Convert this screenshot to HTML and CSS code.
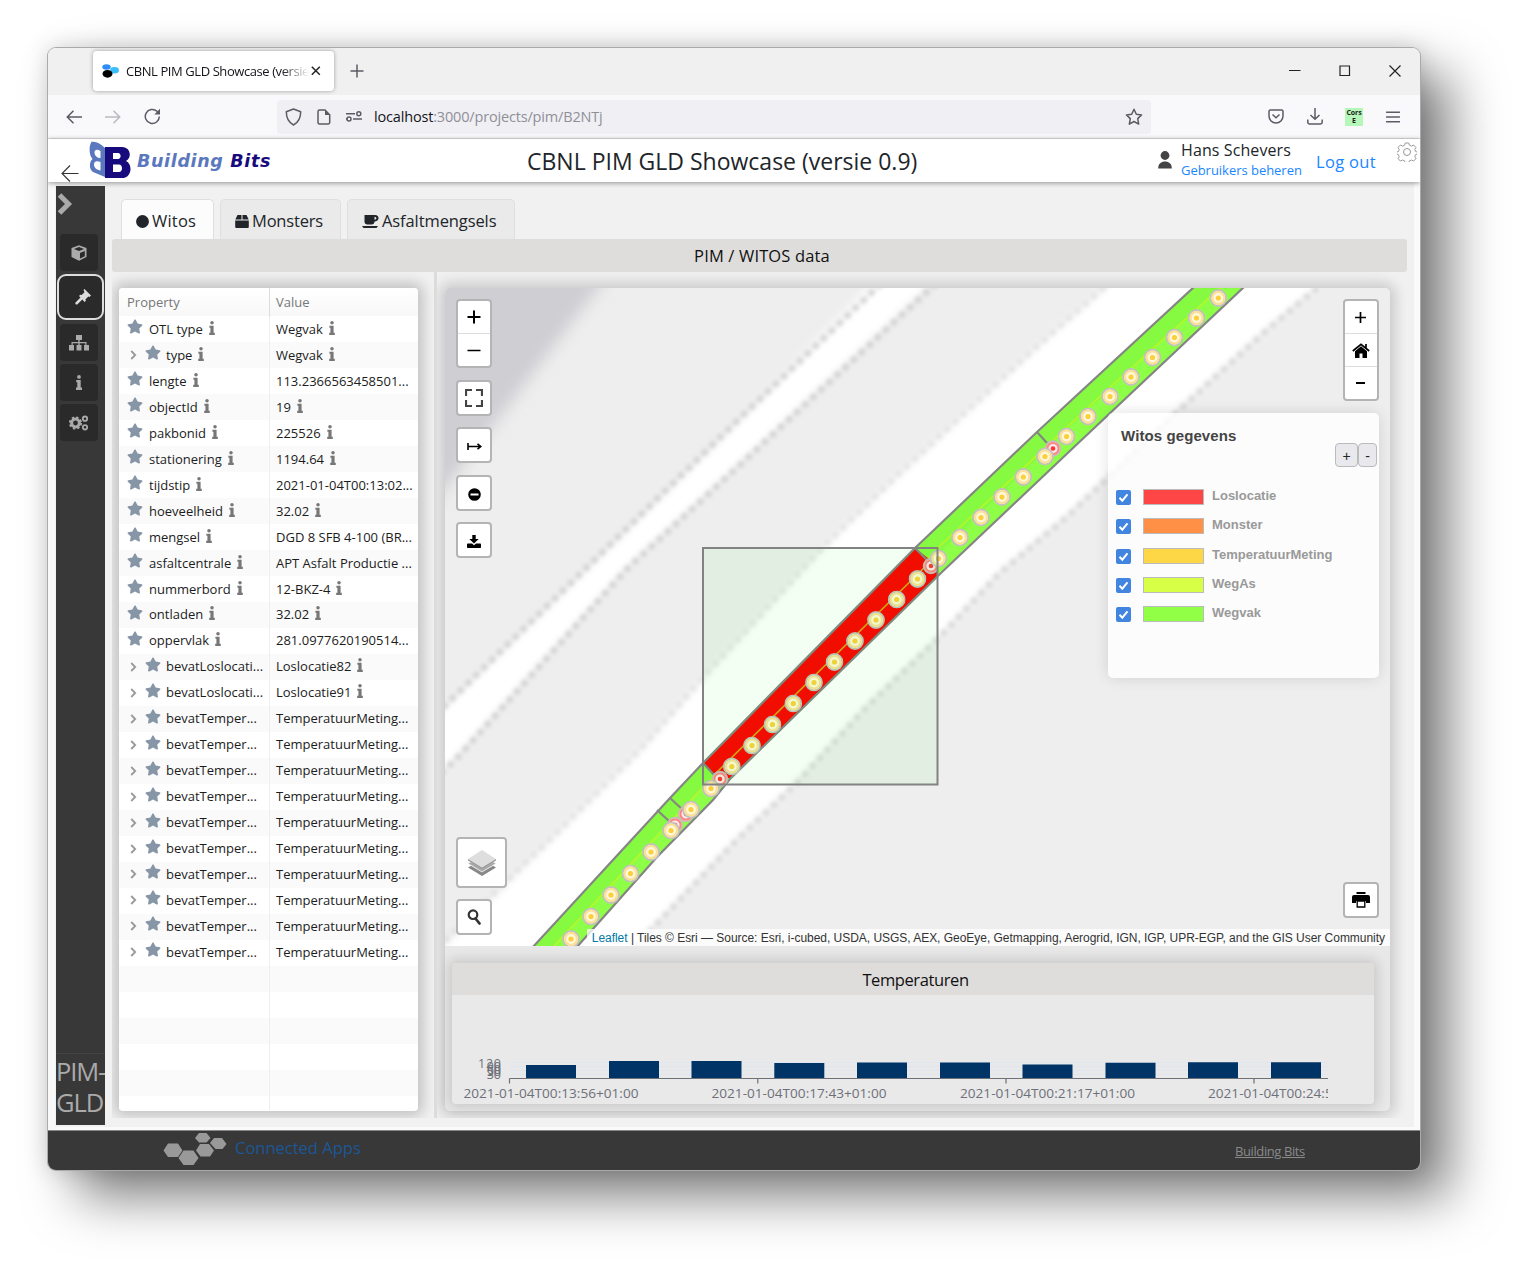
FILE: index.html
```html
<!DOCTYPE html>
<html lang="nl">
<head>
<meta charset="utf-8">
<title>CBNL PIM GLD Showcase (versie 0.9)</title>
<link rel="stylesheet" href="styles.css">
</head>
<body>
<svg width="0" height="0" class="defs">
  <symbol id="star" viewBox="0 0 576 512"><path d="M259.3 17.8L194 150.2 47.9 171.5c-26.2 3.8-36.7 36.1-17.7 54.6l105.7 103-25 145.5c-4.5 26.3 23.2 46 46.4 33.7L288 439.6l130.7 68.7c23.2 12.2 50.9-7.4 46.4-33.7l-25-145.5 105.7-103c19-18.5 8.5-50.8-17.7-54.6L382 150.2 316.7 17.8c-11.7-23.6-45.6-23.9-57.4 0z"/></symbol>
  <symbol id="info" viewBox="0 0 6 15"><circle cx="3" cy="1.9" r="1.9"/><path d="M.2 5h4.5v7.6H6V15H0v-2.4h1.3V7.3H.2z"/></symbol>
  <symbol id="chev" viewBox="0 0 7 10"><path d="M1.2 1l4 4-4 4" fill="none" stroke="#999" stroke-width="1.8"/></symbol>
  <symbol id="check" viewBox="0 0 15 15"><rect width="15" height="15" rx="2" fill="#4285e0"/><path d="M3.5 7.8l2.8 2.9 5.2-6.4" fill="none" stroke="#fff" stroke-width="2"/></symbol>
  <symbol id="y" viewBox="-9 -9 18 18"><circle r="7.9" fill="#fff8dc" stroke="#c4c1bd" stroke-width="2"/><circle r="5.9" fill="none" stroke="#fadf94" stroke-width="2"/><circle r="2.6" fill="#fbd03c"/></symbol>
  <symbol id="r" viewBox="-9 -9 18 18"><circle r="7.4" fill="#fde9e9" stroke="#c9b9b9" stroke-width="1.6"/><circle r="5.6" fill="none" stroke="#fa8585" stroke-width="2"/><circle r="2.3" fill="#f33"/></symbol>
</svg>

<div class="window">
  <div class="tabbar">
    <div class="browser-tab">
      <svg width="17" height="14" viewBox="0 0 17 14"><ellipse cx="4.5" cy="3" rx="4.2" ry="2.8" fill="#2d8cf5"/><ellipse cx="12.5" cy="6.2" rx="4.4" ry="3.2" fill="#3bbdfb"/><ellipse cx="5.5" cy="9.8" rx="5" ry="3.9"/></svg>
      <span class="tab-label">CBNL PIM GLD Showcase (versie 0.9)</span>
      <svg width="10" height="10" viewBox="0 0 10 10"><path d="M.8.8l8 8M8.8.8l-8 8" class="ln dark"/></svg>
    </div>
    <svg class="newtab" width="14" height="14" viewBox="0 0 14 14"><path d="M7 .5v13M.5 7h13" class="ln"/></svg>
    <div class="winbtns">
      <svg width="12" height="12" viewBox="0 0 12 12"><path d="M0 5.5h11.5" class="ln dark thin"/></svg>
      <svg width="12" height="12" viewBox="0 0 12 12"><path d="M1 1h9.5v9.5H1z" class="ln dark thin"/></svg>
      <svg width="12" height="12" viewBox="0 0 12 12"><path d="M.5.5l11 11M11.500.5l-11 11" class="ln dark thin"/></svg>
    </div>
  </div>

  <div class="toolbar">
    <svg width="16" height="14" viewBox="0 0 16 14"><path d="M16 7H1.500M7.500.8L1.300 7l6.200 6.200" class="ln"/></svg>
    <svg width="16" height="14" viewBox="0 0 16 14" class="faded"><path d="M0 7h14.500M8.500.8L14.700 7l-6.200 6.200" class="ln"/></svg>
    <svg width="17" height="17" viewBox="0 0 17 17"><path d="M15.300 8.500a7 7 0 1 1-2.300-5.200l2 2" class="ln"/><path d="M16 .8v5.700h-5.700z" fill="#5b5b66"/></svg>
    <div class="urlbar">
      <svg width="17" height="18" viewBox="0 0 17 18"><path d="M8.500 1L15.700 3.800c0 6-2 10.500-7.200 13.200C3.300 14.300 1.300 9.800 1.300 3.800z" class="ln" stroke-linejoin="round"/></svg>
      <svg width="14" height="16" viewBox="0 0 14 16"><path d="M2.500 1H8l4.700 4.700v7.800a1.500 1.500 0 0 1-1.500 1.500H2.500A1.500 1.500 0 0 1 1 13.500v-11A1.500 1.500 0 0 1 2.500 1z" class="ln"/><path d="M8 1v5h5z" fill="#5b5b66"/></svg>
      <svg width="16" height="11" viewBox="0 0 16 11"><path d="M0 2.800h9M7 8h9M0 8h1" class="ln"/><circle cx="12.800" cy="2.800" r="2" class="ln"/><circle cx="3" cy="8" r="2" class="ln"/></svg>
      <span class="url"><b>localhost</b>:3000/projects/pim/B2NTj</span>
      <svg class="fav" width="18" height="18" viewBox="0 0 18 18"><path d="M9 1.300l2.300 4.900 5.300.7-3.900 3.700 1 5.500L9 13.500l-4.700 2.600 1-5.500L1.400 6.900l5.300-.7z" class="ln" stroke-linejoin="round"/></svg>
    </div>
    <div class="tools">
      <svg width="16" height="15" viewBox="0 0 16 15"><path d="M2.500 1h11a1.500 1.500 0 0 1 1.500 1.500V7A7 7 0 0 1 1 7V2.500A1.500 1.500 0 0 1 2.500 1z" class="ln"/><path d="M4.500 5.500L8 8.800l3.500-3.300" class="ln"/></svg>
      <svg width="16" height="17" viewBox="0 0 16 17"><path d="M8 0v11M3.500 7L8 11.300 12.500 7M.8 11.500v2.700a1.700 1.700 0 0 0 1.700 1.700h11a1.700 1.700 0 0 0 1.700-1.700v-2.700" class="ln"/></svg>
      <span class="cors">Cors<br>E</span>
      <svg width="14" height="12" viewBox="0 0 14 12"><path d="M.5 1.200h13M.5 6h13M.5 10.700h13" class="ln" stroke-linecap="round"/></svg>
    </div>
  </div>

  <header class="apphead">
    <svg class="back" width="18" height="17" viewBox="0 0 18 17"><path d="M17.500 8.500H1M9 .5l-8 8 8 8" fill="none" stroke="#333" stroke-width="1.100"/></svg>
    <svg class="logo" width="42" height="38" viewBox="0 0 42 38"><path fill="#5a78bd" fill-rule="evenodd" d="M16 7v29L4 31c-4-2.500-4-10-.5-13C-.5 13 0 5 2.500.8 7 0 12 3 16 7zM11.500 10c-3-2-6-2-6 1.500s3 5.500 6 5.500zM11.500 21c-3.500-1.500-6.500-1-6.500 2.500s3 5.500 6.500 6z"/><path fill="#160a7c" fill-rule="evenodd" d="M16 6h17c9 0 10 11 4 14 7 3 6 17-4 17H16zM24 12v6h5c3.500 0 3.500-6 0-6zM24 23.500V31h6c4 0 4-7.500 0-7.500z"/></svg>
    <span class="brand">Building <b>Bits</b></span>
    <h1>CBNL PIM GLD Showcase (versie 0.9)</h1>
    <svg class="person" width="14" height="18" viewBox="0 0 14 18"><circle cx="7" cy="4.500" r="4.400"/><path d="M.200 17.500c0-5 3-7 6.800-7s6.800 2 6.800 7z"/></svg>
    <div class="user"><span>Hans Schevers</span><a>Gebruikers beheren</a></div>
    <a class="logout">Log out</a>
    <svg class="gear" width="20" height="20" viewBox="-10 -10 20 20"><path d="M-1.700-9h3.400l.7 2.200 2.100.9 2.100-1.100 2.300 2.400-1.100 2 .8 2.100 2.200.7v1.700l-2.200.7-.8 2.100 1.100 2-2.300 2.400-2.100-1.100-2.100.9-.7 2.200h-3.400l-.7-2.200-2.100-.9-2.100 1.100-2.300-2.400 1.100-2-.8-2.100-2.200-.7v-1.700l2.200-.7.800-2.100-1.100-2 2.300-2.400 2.100 1.100 2.100-.9z" fill="none" stroke="#999"/><circle r="3.500" fill="none" stroke="#999"/></svg>
  </header>

  <div class="body">
    <nav class="side">
      <svg class="expand" width="16" height="22" viewBox="0 0 16 22"><path d="M2.500 2l9 9-9 9" fill="none" stroke="#aaa" stroke-width="5"/></svg>
      <div class="sbtn"><svg width="16" height="16" viewBox="0 0 16 16"><path fill-rule="evenodd" d="M8 .300l7.500 2.800v9L8 15.700.500 12.100v-9zM8 2L3 3.900 8 6l5-2.100zM9 8v5.500l4.800-2.300V6z"/></svg></div>
      <div class="sbtn active"><svg width="16" height="16" viewBox="0 0 16 16"><path d="M9.500 0L16 6.500l-1.500 1.600-1.200-.6-2.900 2.900.5 1.300L9.500 13 7.300 10.500 2.500 15.300c-1.300 1-2.700-.6-2-1.900L5.500 8.600 4 7l1.300-1.300 1.300.4 2.900-2.900L8.500 1z"/></svg></div>
      <div class="sbtn"><svg width="20" height="16" viewBox="0 0 20 16"><path d="M7 0h6v5h-2.300v2H17.500v3H20v5.500h-5V10h1.300V8.200h-5.600V10h1.800v5.500h-5V10h1.800V8.200H3.700V10H5v5.500H0V10h2.500V7h6.800V5H7z"/></svg></div>
      <div class="sbtn"><svg width="6" height="15"><use href="#info"/></svg></div>
      <div class="sbtn"><svg width="20" height="16" viewBox="0 0 20 16"><circle cx="6.500" cy="8" r="3.900" fill="none" stroke="#aaa" stroke-width="3"/><circle cx="6.500" cy="8" r="5.600" fill="none" stroke="#aaa" stroke-width="2" stroke-dasharray="2.400 2"/><circle cx="16" cy="3.700" r="2.200" fill="none" stroke="#aaa" stroke-width="1.800"/><circle cx="16" cy="12.300" r="2.200" fill="none" stroke="#aaa" stroke-width="1.800"/></svg></div>
      <div class="sidename">PIM-GLD</div>
    </nav>

    <main class="main">
      <div class="tabs">
        <div class="tab on"><svg width="13" height="13" viewBox="0 0 13 13"><circle cx="6.500" cy="6.500" r="6.400"/></svg><span>Witos</span></div>
        <div class="tab t2"><svg width="14" height="13" viewBox="0 0 14 13"><path d="M2.500 0h4v4.500H.300zM7.500 0h4l2.200 4.500H7.500zM.200 5.500h13.600V12a1 1 0 0 1-1 1H1.200a1 1 0 0 1-1-1z"/></svg><span>Monsters</span></div>
        <div class="tab t3"><svg width="17" height="13" viewBox="0 0 17 13"><path fill-rule="evenodd" d="M2.500 0H13c5 0 4.500 6.500 0 6.500h-.5A3 3 0 0 1 9.500 9.500h-4a3 3 0 0 1-3-3zM12.500 1.800v3c2.500 0 2.500-3 0-3zM0 11h16l-1.500 2h-13z"/></svg><span>Asfaltmengsels</span></div>
      </div>
      <div class="pagetitle">PIM / WITOS data</div>
      <div class="split">
        <section class="left">
          <div class="grid">
            <div class="ghead"><span>Property</span><span>Value</span></div>
            <div class="gbody">
              <div class="row"><div><svg class="s"><use href="#star"/></svg><span>OTL type</span><svg class="i"><use href="#info"/></svg></div><div><span>Wegvak</span><svg class="i"><use href="#info"/></svg></div></div>
              <div class="row"><div><svg class="c"><use href="#chev"/></svg><svg class="s"><use href="#star"/></svg><span>type</span><svg class="i"><use href="#info"/></svg></div><div><span>Wegvak</span><svg class="i"><use href="#info"/></svg></div></div>
              <div class="row"><div><svg class="s"><use href="#star"/></svg><span>lengte</span><svg class="i"><use href="#info"/></svg></div><div><span>113.2366563458501...</span></div></div>
              <div class="row"><div><svg class="s"><use href="#star"/></svg><span>objectId</span><svg class="i"><use href="#info"/></svg></div><div><span>19</span><svg class="i"><use href="#info"/></svg></div></div>
              <div class="row"><div><svg class="s"><use href="#star"/></svg><span>pakbonid</span><svg class="i"><use href="#info"/></svg></div><div><span>225526</span><svg class="i"><use href="#info"/></svg></div></div>
              <div class="row"><div><svg class="s"><use href="#star"/></svg><span>stationering</span><svg class="i"><use href="#info"/></svg></div><div><span>1194.64</span><svg class="i"><use href="#info"/></svg></div></div>
              <div class="row"><div><svg class="s"><use href="#star"/></svg><span>tijdstip</span><svg class="i"><use href="#info"/></svg></div><div><span>2021-01-04T00:13:02...</span></div></div>
              <div class="row"><div><svg class="s"><use href="#star"/></svg><span>hoeveelheid</span><svg class="i"><use href="#info"/></svg></div><div><span>32.02</span><svg class="i"><use href="#info"/></svg></div></div>
              <div class="row"><div><svg class="s"><use href="#star"/></svg><span>mengsel</span><svg class="i"><use href="#info"/></svg></div><div><span>DGD 8 SFB 4-100 (BR...</span></div></div>
              <div class="row"><div><svg class="s"><use href="#star"/></svg><span>asfaltcentrale</span><svg class="i"><use href="#info"/></svg></div><div><span>APT Asfalt Productie ...</span></div></div>
              <div class="row"><div><svg class="s"><use href="#star"/></svg><span>nummerbord</span><svg class="i"><use href="#info"/></svg></div><div><span>12-BKZ-4</span><svg class="i"><use href="#info"/></svg></div></div>
              <div class="row"><div><svg class="s"><use href="#star"/></svg><span>ontladen</span><svg class="i"><use href="#info"/></svg></div><div><span>32.02</span><svg class="i"><use href="#info"/></svg></div></div>
              <div class="row"><div><svg class="s"><use href="#star"/></svg><span>oppervlak</span><svg class="i"><use href="#info"/></svg></div><div><span>281.0977620190514...</span></div></div>
              <div class="row"><div><svg class="c"><use href="#chev"/></svg><svg class="s"><use href="#star"/></svg><span>bevatLoslocati...</span></div><div><span>Loslocatie82</span><svg class="i"><use href="#info"/></svg></div></div>
              <div class="row"><div><svg class="c"><use href="#chev"/></svg><svg class="s"><use href="#star"/></svg><span>bevatLoslocati...</span></div><div><span>Loslocatie91</span><svg class="i"><use href="#info"/></svg></div></div>
              <div class="row"><div><svg class="c"><use href="#chev"/></svg><svg class="s"><use href="#star"/></svg><span>bevatTemper...</span></div><div><span>TemperatuurMeting...</span></div></div>
              <div class="row"><div><svg class="c"><use href="#chev"/></svg><svg class="s"><use href="#star"/></svg><span>bevatTemper...</span></div><div><span>TemperatuurMeting...</span></div></div>
              <div class="row"><div><svg class="c"><use href="#chev"/></svg><svg class="s"><use href="#star"/></svg><span>bevatTemper...</span></div><div><span>TemperatuurMeting...</span></div></div>
              <div class="row"><div><svg class="c"><use href="#chev"/></svg><svg class="s"><use href="#star"/></svg><span>bevatTemper...</span></div><div><span>TemperatuurMeting...</span></div></div>
              <div class="row"><div><svg class="c"><use href="#chev"/></svg><svg class="s"><use href="#star"/></svg><span>bevatTemper...</span></div><div><span>TemperatuurMeting...</span></div></div>
              <div class="row"><div><svg class="c"><use href="#chev"/></svg><svg class="s"><use href="#star"/></svg><span>bevatTemper...</span></div><div><span>TemperatuurMeting...</span></div></div>
              <div class="row"><div><svg class="c"><use href="#chev"/></svg><svg class="s"><use href="#star"/></svg><span>bevatTemper...</span></div><div><span>TemperatuurMeting...</span></div></div>
              <div class="row"><div><svg class="c"><use href="#chev"/></svg><svg class="s"><use href="#star"/></svg><span>bevatTemper...</span></div><div><span>TemperatuurMeting...</span></div></div>
              <div class="row"><div><svg class="c"><use href="#chev"/></svg><svg class="s"><use href="#star"/></svg><span>bevatTemper...</span></div><div><span>TemperatuurMeting...</span></div></div>
              <div class="row"><div><svg class="c"><use href="#chev"/></svg><svg class="s"><use href="#star"/></svg><span>bevatTemper...</span></div><div><span>TemperatuurMeting...</span></div></div>
            </div>
          </div>
        </section>
        <section class="right">
          <div class="rpanel">
            <div class="map">
              <svg class="canvas" width="945" height="658" viewBox="445 288 945 658">
                <defs><filter id="soft"><feGaussianBlur stdDeviation="4"/></filter><filter id="blur"><feGaussianBlur stdDeviation="8"/></filter><filter id="edge"><feGaussianBlur stdDeviation="2.200"/></filter></defs>
                <rect x="445" y="288" width="945" height="658" fill="#eee"/>
                <path d="M425 260H620L425 515z" fill="#cfced3" filter="url(#blur)"/>
                <g filter="url(#soft)">
                  <path d="M885 270L740 420 583 573 425 725V795L460 753 627 567 740 463 945 270z" fill="#fff"/>
                  <path d="M1130 265L1033 350 900 473 823 547 707 673 640 750 560 830 425 965H618L673 907 737 840 797 783 867 707 937 640 1000 573 1067 517 1187 403 1267 330 1345 265z" fill="#fff"/>
                </g>
                <g fill="none" stroke="#c8c8c8" stroke-width="6" stroke-dasharray="7 4" filter="url(#edge)">
                  <path d="M890 275L740 418 583 571 425 725M945 275L740 465 627 569 460 755 425 790" stroke-opacity=".8"/>
                  <path d="M1130 265L1033 350 900 473 823 547 707 673 640 750 560 830 435 950" stroke-opacity=".4"/>
                  <path d="M618 965L673 907 737 840 797 783 867 707 937 640 1000 573 1067 517 1187 403 1267 330 1345 265" stroke-opacity=".65"/>
                </g>
                <path d="M1194 287L1037 432 915 548 703 763 670 798 532 948H576L657 857 713 800 730 778 942 571 1073 448 1244 287z" fill="#8dff46"/>
                <path d="M1219 287L1055 441 930 562 712 778 663 828 550 950H532L703 763 915 548 1194 287z" fill="#80f53c" opacity=".5"/>
                <path d="M1230 279L1107 390 943 543 707 783 553 947" fill="none" stroke="#baf626" stroke-width="1.500"/>
                <path d="M915 548L703 763 719 779 730 778 937 577 938 566z" fill="#fe0000"/>
                <path d="M935 557L714 775" stroke="#d9a513" stroke-width="1.600"/>
                <path d="M1194 287L1037 432 915 548 703 763 670 798 532 948M576 948L657 857 713 800 730 779 942 572 1073 448 1244 287M1037 432l10 11M915 548l12 12M703 763l13 14M670 798l13 12M657 810l13 12" fill="none" stroke="#858585" stroke-width="2.200"/>
                <g id="markers">
                  <use href="#r" x="1044" y="439.500" width="18" height="18"/><use href="#r" x="922" y="557" width="18" height="18"/><use href="#r" x="711" y="770" width="18" height="18"/><use href="#r" x="677" y="805" width="18" height="18"/><use href="#r" x="666" y="816" width="18" height="18"/>
                  <use href="#y" x="1209.300" y="289" width="18" height="18"/><use href="#y" x="1187.500" y="309" width="18" height="18"/><use href="#y" x="1165.500" y="328.500" width="18" height="18"/><use href="#y" x="1143.500" y="348.500" width="18" height="18"/><use href="#y" x="1122" y="368" width="18" height="18"/><use href="#y" x="1101" y="387.500" width="18" height="18"/><use href="#y" x="1079" y="407.500" width="18" height="18"/><use href="#y" x="1057.500" y="427.500" width="18" height="18"/><use href="#y" x="1036" y="447.500" width="18" height="18"/><use href="#y" x="1014.300" y="468" width="18" height="18"/><use href="#y" x="993" y="488" width="18" height="18"/><use href="#y" x="972" y="508.500" width="18" height="18"/><use href="#y" x="951" y="528.500" width="18" height="18"/><use href="#y" x="929.500" y="549.500" width="18" height="18"/><use href="#y" x="908.500" y="570" width="18" height="18"/><use href="#y" x="887.700" y="590.500" width="18" height="18"/><use href="#y" x="867" y="611" width="18" height="18"/><use href="#y" x="846" y="632" width="18" height="18"/><use href="#y" x="825.500" y="653" width="18" height="18"/><use href="#y" x="805" y="673.500" width="18" height="18"/><use href="#y" x="784.300" y="694.500" width="18" height="18"/><use href="#y" x="763.500" y="715.500" width="18" height="18"/><use href="#y" x="743" y="736.500" width="18" height="18"/><use href="#y" x="722.800" y="757.500" width="18" height="18"/><use href="#y" x="702" y="779.500" width="18" height="18"/><use href="#y" x="682" y="800.500" width="18" height="18"/><use href="#y" x="662" y="821.500" width="18" height="18"/><use href="#y" x="642" y="843" width="18" height="18"/><use href="#y" x="621.500" y="864.500" width="18" height="18"/><use href="#y" x="602" y="886" width="18" height="18"/><use href="#y" x="582" y="907.500" width="18" height="18"/><use href="#y" x="562" y="930" width="18" height="18"/>
                </g>
                <rect x="703" y="548" width="234.500" height="236.500" fill="#0f0" fill-opacity=".05" stroke="#828282" stroke-width="2"/>
              </svg>
              <div class="ctl-left">
                <div class="ctl zoom"><div><svg width="14" height="14" viewBox="0 0 14 14"><path d="M7 .5v13M.5 7h13" stroke="#000" stroke-width="2"/></svg></div><div><svg width="14" height="14" viewBox="0 0 14 14"><path d="M.5 7.500h13" stroke="#000" stroke-width="1.600"/></svg></div></div>
                <div class="ctl"><svg width="18" height="18" viewBox="0 0 18 18"><path d="M1 7V1h6M11 1h6v6M17 11v6h-6M7 17H1v-6" fill="none" stroke="#444" stroke-width="2.200"/></svg></div>
                <div class="ctl"><svg class="down" width="15" height="9" viewBox="0 0 15 9"><path d="M1 1v7M1 4.500h12M10.500 1.800l3.300 2.700-3.300 2.700" fill="none" stroke="#000" stroke-width="1.600"/></svg></div>
                <div class="ctl"><svg class="down" width="13" height="13" viewBox="0 0 13 13"><circle cx="6.500" cy="6.500" r="6.300"/><path d="M2.500 6.500h8" stroke="#fff" stroke-width="2"/></svg></div>
                <div class="ctl"><svg class="down" width="14" height="13" viewBox="0 0 14 13"><path d="M5.300 0h3.400v4h3L7 8.600 2.300 4h3zM.8 8.500H5l2 1.800 2-1.800h4.200a.8.8 0 0 1 .8.8v2.900a.8.8 0 0 1-.8.8H.8a.8.8 0 0 1-.8-.8V9.300a.8.8 0 0 1 .8-.8z"/></svg></div>
              </div>
              <div class="ctl layers"><svg width="30" height="28" viewBox="0 0 30 28"><path d="M1 18.500L15 27l14-8.500-3-1.800L15 23 4 16.700z" fill="#888"/><path d="M1 14.500L15 23l14-8.500-3-1.800L15 19 4 12.700z" fill="#aaa" stroke="#fff" stroke-width=".6"/><path d="M1 10L15 18.500 29 10 15 1z" fill="#dedede"/><path d="M1 10L15 18.500 29 10v1.600L15 20 1 11.600z" fill="#999"/></svg></div>
              <div class="ctl search"><svg width="15" height="17" viewBox="0 0 15 17"><circle cx="6" cy="5.700" r="4.300" fill="none" stroke="#333" stroke-width="2.200"/><path d="M8.500 9.500l4 5" stroke="#333" stroke-width="2.800" stroke-linecap="round"/></svg></div>
              <div class="ctl home"><div><svg width="11" height="11" viewBox="0 0 11 11"><path d="M5.500 0v11M0 5.500h11" stroke="#000" stroke-width="1.700"/></svg></div><div><svg width="18" height="15" viewBox="0 0 18 15"><path d="M9 3.200l6 5V15h-4.500v-4.500h-3V15H3V8.200z"/><path d="M.8 8L9 1.300 17.200 8M14 1v4" fill="none" stroke="#000" stroke-width="1.700"/></svg></div><div><svg width="11" height="11" viewBox="0 0 11 11"><path d="M1 5h9" stroke="#000" stroke-width="1.800"/></svg></div></div>
              <div class="legend">
                <h2>Witos gegevens</h2>
                <div class="lbtns"><span>+</span><span class="minus">-</span></div>
                <div class="lrow"><svg><use href="#check"/></svg><i class="red"></i><span>Loslocatie</span></div>
                <div class="lrow"><svg><use href="#check"/></svg><i class="orange"></i><span>Monster</span></div>
                <div class="lrow"><svg><use href="#check"/></svg><i class="amber"></i><span>TemperatuurMeting</span></div>
                <div class="lrow"><svg><use href="#check"/></svg><i class="lime"></i><span>WegAs</span></div>
                <div class="lrow"><svg><use href="#check"/></svg><i class="green"></i><span>Wegvak</span></div>
              </div>
              <div class="ctl print"><svg width="18" height="16" viewBox="0 0 18 16"><path d="M4.500 0h9v2h-9zM2 3h14a2 2 0 0 1 2 2v6h-4V9H4v2H0V5a2 2 0 0 1 2-2z"/><path d="M5.200 9h7.600v6H5.200z" fill="#fff" stroke="#000" stroke-width="1.300"/></svg></div>
              <div class="attr"><a>Leaflet</a> | Tiles © Esri — Source: Esri, i-cubed, USDA, USGS, AEX, GeoEye, Getmapping, Aerogrid, IGN, IGP, UPR-EGP, and the GIS User Community</div>
            </div>
            <div class="chart">
              <div class="ctitle">Temperaturen</div>
              <svg width="876" height="109" viewBox="452 995 876 109">
                <path d="M510 1062.500h818M510 1066.500h818M510 1070.500h818M510 1074.500h818" stroke="#e0e6f1"/>
                <g fill="#003366"><path d="M526 1065h50v14h-50zM609 1061h50v18h-50zM691.500 1061h50v18h-50zM774.300 1063h50v16h-50zM857 1062.500h50v16.500h-50zM940 1062.500h50v16.500h-50zM1022.500 1064.500h50v14.500h-50zM1105.500 1062.700h50v16.300h-50zM1188 1062.300h50v16.700h-50zM1271 1062.300h50v16.700h-50z"/></g>
                <path d="M509.500 1078.500H1328M509.500 1078.500v5M757.800 1078.500v5M1006 1078.500v5M1254 1078.500v5" fill="none" stroke="#6e7079" stroke-width="1.200"/>
                <g class="ylab"><text x="501" y="1079">30</text><text x="501" y="1076">50</text><text x="501" y="1074">60</text><text x="501" y="1071">90</text><text x="501" y="1068" textLength="23">120</text></g>
                <g class="xlab"><text x="463.500" y="1097.500" textLength="175" lengthAdjust="spacingAndGlyphs">2021-01-04T00:13:56+01:00</text><text x="711.500" y="1097.500" textLength="175" lengthAdjust="spacingAndGlyphs">2021-01-04T00:17:43+01:00</text><text x="960" y="1097.500" textLength="175" lengthAdjust="spacingAndGlyphs">2021-01-04T00:21:17+01:00</text><text x="1208" y="1097.500" textLength="175" lengthAdjust="spacingAndGlyphs">2021-01-04T00:24:55+01:00</text></g>
              </svg>
            </div>
          </div>
        </section>
      </div>
    </main>
  </div>

  <footer class="foot">
    <svg width="64" height="34" viewBox="0 0 64 34" fill="#999"><path d="M5 11.500h10l4.500 7-4.500 6.500H5L.500 18.500zM20.500 18.500h10l5 7.500-5 7h-10l-5-7zM37 12h9l5 6.500-4 6h-9.500L33 18.500zM36 1h7.500l4 5-4 4.500H36L32 6zM51 6h8l4.500 6-4 5h-7L47 11z"/></svg>
    <a class="ca">Connected Apps</a>
    <a class="bb">Building Bits</a>
  </footer>
</div>
</body>
</html>
```
FILE: styles.css
```css
* { box-sizing: border-box; }
body { margin: 0; width: 1516px; height: 1266px; padding: 48px; background: #fff; overflow: hidden; font-family: "Open Sans", "Noto Sans", sans-serif; color: #212529; }
svg { display: block; flex: none; overflow: hidden; }
.defs { position: absolute; }
.ln { fill: none; stroke: #5b5b66; stroke-width: 1.5; }
.ln.dark { stroke: #222; }
.ln.thin { stroke-width: 1.2; }
.faded { opacity: .4; }
.window { width: 1372px; height: 1122px; display: flex; flex-direction: column; border-radius: 8px; overflow: hidden; background: #f1f1f1; box-shadow: 0 0 0 1px #aaa, 30px 27px 52px rgba(0,0,0,.5), 0 0 24px rgba(0,0,0,.18); }

.tabbar { height: 47px; background: #f0f0f0; display: flex; align-items: center; padding: 0 0 2px 45px; flex: none; }
.browser-tab { width: 241px; height: 40px; background: #fff; border-radius: 4px; box-shadow: 0 0 4px rgba(0,0,0,.35); display: flex; align-items: center; padding: 0 13px 0 9px; gap: 7px; }
.tab-label { flex: 1; width: 0; font-size: 13px; letter-spacing: -.42px; white-space: nowrap; overflow: hidden; color: #15141a; -webkit-mask-image: linear-gradient(90deg, #000 85%, transparent); mask-image: linear-gradient(90deg, #000 85%, transparent); margin-right: -5px; }
.newtab { margin-left: 16px; }
.winbtns { margin-left: auto; margin-right: 19px; display: flex; gap: 38px; }

.toolbar { height: 44px; flex: none; background: #f9f9fb; border-bottom: 1px solid #ddd; display: flex; align-items: center; padding-left: 18px; gap: 23px; }
.urlbar { width: 874px; height: 34px; margin-left: 93px; background: #f0f0f4; border-radius: 4px; display: flex; align-items: center; padding: 0 8px; gap: 15px; }
.url { font-size: 14.5px; letter-spacing: -.17px; color: #8f8f98; margin-left: -3px; white-space: nowrap; }
.url b { font-weight: 400; color: #15141a; }
.fav { margin-left: auto; }
.tools { display: flex; align-items: center; gap: 22.500px; margin-left: 94px; }
.cors { width: 18px; height: 18px; background: #b4f7b8; font: bold 7px/8px "Open Sans", sans-serif; text-align: center; color: #222; padding-top: 1px; letter-spacing: -.1px; }

.apphead { height: 43px; flex: none; background: #fff; box-shadow: 0 1px 5px rgba(0,0,0,.4); display: flex; position: relative; z-index: 2; padding-left: 13px; }
.back { margin-top: 26px; }
.logo { margin: 2px 0 0 10px; }
.brand { margin: 11px 0 0 6px; width: 136px; font: italic bold 17.500px/22px "DejaVu Sans", sans-serif; letter-spacing: .65px; color: #5a78bd; white-space: nowrap; }
.brand b { color: #160a7c; }
h1 { margin: 6px 0 0 254px; width: 393px; font-size: 23px; line-height: 32px; font-weight: 400; letter-spacing: 0; white-space: nowrap; }
.person { margin: 12px 0 0 238px; fill: #444; }
.user { margin-left: 9px; width: 123px; display: flex; flex-direction: column; font-size: 16px; line-height: 20px; letter-spacing: .1px; white-space: nowrap; padding-top: 1px; }
.user a { color: #1a86ff; font-size: 13px; line-height: 20px; letter-spacing: -.03px; }
.logout { margin: 11px 0 0 12px; width: 60px; color: #1a86ff; font-size: 16.500px; line-height: 24px; letter-spacing: .3px; white-space: nowrap; }
.gear { margin: 3px 0 0 21px; }

.body { flex: 1; min-height: 0; display: flex; padding: 4px 7px 5px 8px; gap: 7px; box-shadow: inset 7px 0 #f8f8f8, inset -6px 0 #fafafa, inset 0 -3px #fafafa; }
.side { width: 49px; background: #383838; display: flex; flex-direction: column; fill: #aaa; flex: none; overflow: hidden; }
.expand { margin: 7px 0 19px 1px; height: 22px; }
.sbtn { width: 38px; height: 37px; margin: 0 0 3px 4px; background: #2a2a2a; border-radius: 4px; display: flex; align-items: center; justify-content: center; flex: none; }
.sbtn.active { width: 47px; height: 46px; margin: 0 0 4px 1px; border: 2px solid #ddd; border-radius: 9px; padding-left: 4px; fill: #ddd; }
.sidename { margin-top: auto; height: 72px; border-top: 1px solid #444; color: #aaa; font-size: 25.500px; line-height: 31px; letter-spacing: -1.100px; padding-top: 2px; width: 60px; }
.main { flex: 1; min-width: 0; display: flex; flex-direction: column; padding-right: 6px; }
.tabs { display: flex; height: 53px; padding: 13px 0 0 9px; gap: 6px; flex: none; }
.tab { width: 93px; border: 1px solid #dfdfdf; border-bottom: 0; border-radius: 5px 5px 0 0; background: #eaeaea; display: flex; align-items: center; gap: 3px; padding: 2px 0 0 14px; font-size: 16.500px; letter-spacing: -.1px; white-space: nowrap; fill: #212529; }
.tab span { margin-top: -1px; }
.tab svg { margin-top: 1px; }
.tab.on { background: #fcfcfc; letter-spacing: .2px; }
.tab.t2 { width: 121px; letter-spacing: -.2px; }
.tab.t3 { width: 168px; }
.pagetitle { height: 33px; flex: none; background: #dedddc; border-radius: 3px; text-align: center; font-size: 16.500px; line-height: 34px; letter-spacing: .15px; color: #111; padding-left: 5px; }
.split { flex: 1; display: flex; min-height: 0; padding-bottom: 7px; }
.left { width: 325px; border-right: 3px solid #dcdcdc; padding: 16px 16px 7px 7px; overflow: hidden; flex: none; }
.grid { height: 823px; background: #fff; border-radius: 4px; box-shadow: 0 0 14px 5px rgba(0,0,0,.2); overflow: hidden; font-size: 13px; color: #1c1c1c; letter-spacing: 0; }
.ghead { height: 29px; display: grid; grid-template-columns: 150px 1fr; background: linear-gradient(#fff, #f8f8f8); border-bottom: 1px solid #e2e2e2; color: #777; line-height: 29px; }
.ghead span { padding-left: 8px; }
.ghead span + span { border-left: 1px solid #ddd; padding-left: 6px; }
.gbody { height: 794px; margin-top: -1px; background: linear-gradient(90deg, transparent 150px, #eee 150px, #eee 151px, transparent 151px), repeating-linear-gradient(#fff 0, #fff 26px, #fafafa 26px, #fafafa 52px); }
.row { height: 25.960px; display: grid; grid-template-columns: 150px 1fr; white-space: nowrap; }
.row > div { display: flex; align-items: center; padding-left: 8px; overflow: hidden; }
.row > div + div { padding-left: 7px; }
.s { width: 16px; height: 15px; fill: #8696a7; margin: -4px 6px 0 0; }
.c { width: 7px; height: 10px; margin: 1px 8px 0 3px; }
.c + .s { margin-right: 5px; }
.i { width: 6px; height: 14px; fill: #777; margin: -2px 0 0 6px; }

.right { flex: 1; min-width: 0; padding: 16px 17px 7px 8px; overflow: hidden; }
.rpanel { width: 945px; height: 823px; background: #e8e8e8; border-radius: 5px; box-shadow: 0 0 14px 5px rgba(0,0,0,.17); }
.map { height: 658px; position: relative; overflow: hidden; border-radius: 5px 5px 0 0; }
.ctl { width: 36px; height: 36px; background: #fff; border: 2px solid #b4b4b6; border-radius: 4px; display: flex; align-items: center; justify-content: center; }
.down { margin-top: 3px; }
.ctl-left { position: absolute; left: 11px; top: 11px; display: flex; flex-direction: column; gap: 11.500px; }
.zoom, .home { flex-direction: column; align-items: stretch; }
.zoom { height: 69px; }
.zoom div, .home div { flex: 1; display: flex; align-items: center; justify-content: center; border-top: 1px solid #ddd; }
.zoom div:first-child, .home div:first-child { border-top: 0; }
.home { position: absolute; left: 897.500px; top: 11px; height: 102px; }
.layers { position: absolute; left: 11px; top: 549px; width: 51px; height: 51px; }
.search { position: absolute; left: 11px; top: 611px; }
.print { position: absolute; left: 897.500px; top: 594px; }
.legend { position: absolute; left: 663px; top: 125px; width: 271px; height: 265px; background: rgba(255,255,255,.8); border-radius: 5px; box-shadow: 0 0 15px rgba(0,0,0,.12); font-family: "Liberation Sans", Arial, sans-serif; }
.legend h2 { margin: 14px 0 0 13px; font-size: 15px; line-height: 18px; color: #444; letter-spacing: .1px; }
.lbtns { display: flex; margin: -2px 2px 21px 0; justify-content: flex-end; }
.lbtns span { width: 23px; height: 24px; border: 1px solid #bbb; border-radius: 4px; background: #e9e9ed; text-align: center; font-size: 14px; line-height: 25px; }
.lbtns .minus { width: 19px; }
.lrow { height: 29.300px; display: flex; align-items: flex-start; padding-left: 8px; }
.lrow svg { width: 15px; height: 15px; margin-top: 2px; }
.lrow i { width: 61px; height: 16px; border: 1px solid #bbb; margin: 1px 8px 0 12px; }
.lrow span { font-size: 13px; line-height: 16px; font-weight: bold; color: #999; }
.red { background: #ff4646; }
.orange { background: #ff9046; }
.amber { background: #fed746; }
.lime { background: #d7ff46; }
.green { background: #90ff46; }
.attr { position: absolute; right: 0; bottom: 0; height: 17px; padding: 0 5px; background: rgba(255,255,255,.75); font: 12px/19px "Liberation Sans", Arial, sans-serif; letter-spacing: -.033px; color: #333; white-space: nowrap; }
.attr a { color: #0078a8; }
.chart { width: 922px; height: 141px; margin: 17px 0 0 7px; background: #e9e9e9; border-radius: 4px; box-shadow: 0 0 12px 4px rgba(0,0,0,.13); }
.ctitle { height: 32px; background: #dedddc; border-radius: 4px 4px 0 0; text-align: center; font-size: 16.500px; line-height: 34px; letter-spacing: -.4px; color: #111; padding-left: 5px; }
.ylab { font-size: 12.500px; fill: #6e7079; text-anchor: end; }
.xlab { font-size: 13.500px; fill: #6e7079; }

.foot { height: 40px; flex: none; background: #383838; border-top: 1px solid #888; display: flex; padding: 1px 0 0 115px; }
.ca { margin: 4px 0 0 8px; width: 126px; color: #1b5796; font-size: 16.500px; line-height: 24px; white-space: nowrap; }
.bb { margin: 9px 0 0 874px; color: #8a8a8a; font-size: 13px; line-height: 20px; text-decoration: underline; letter-spacing: -.4px; white-space: nowrap; }
```
